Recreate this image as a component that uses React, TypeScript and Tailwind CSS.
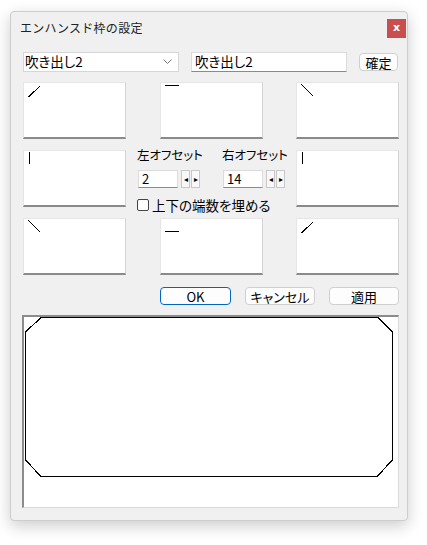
import React from "react";

type Mark = { x1: number; y1: number; x2: number; y2: number; w?: number };

const marks: (Mark | null)[] = [
  { x1: 4.5, y1: 14, x2: 16.5, y2: 2.5 },
  { x1: 4, y1: 2, x2: 18, y2: 2 },
  { x1: 4.5, y1: 1.5, x2: 16.5, y2: 13.5 },
  { x1: 5.5, y1: 1, x2: 5.5, y2: 13, w: 1.6 },
  null,
  { x1: 5.5, y1: 1, x2: 5.5, y2: 13, w: 1.6 },
  { x1: 4.5, y1: 1.5, x2: 16.5, y2: 13.5 },
  { x1: 4, y1: 12.5, x2: 18, y2: 12.5 },
  { x1: 4.5, y1: 14, x2: 16.5, y2: 2.5 },
];

function CornerBox({ m }: { m: Mark }) {
  return (
    <div className="h-[57px] w-[103px] bg-white border border-[#e6e6e6] border-r-[#d4d4d4] border-b-2 border-b-[#8a8a8a]">
      <svg width="20" height="16" className="block" shapeRendering="crispEdges">
        <line x1={m.x1} y1={m.y1} x2={m.x2} y2={m.y2} stroke="#000" strokeWidth={m.w ?? 1} />
      </svg>
    </div>
  );
}

function Spinner() {
  return (
    <div className="flex gap-[1px] h-[18px]">
      {["◂", "▸"].map((c) => (
        <div
          key={c}
          className="w-[9px] h-full border border-[#c8c8c8] bg-[#f8f8f8] flex items-center justify-center text-[8px] leading-none text-black"
        >
          {c}
        </div>
      ))}
    </div>
  );
}

function Offset({ label, value, wide }: { label: string; value: string; wide?: boolean }) {
  return (
    <div className={"flex flex-col " + (wide ? "w-[85px]" : "")}>
      <div className="text-[12.5px] leading-[14px] h-[14px] -mt-[2px] [font-feature-settings:'palt']">{label}</div>
      <div className="flex items-center gap-[3px] mt-[8px]">
        <div className="w-[40px] h-[18px] bg-white border border-[#dcdcdc] border-b-[#8a8a8a] pl-[3px] text-[13px] leading-[16px] ml-[1px]">
          {value}
        </div>
        <Spinner />
      </div>
    </div>
  );
}

function Btn({ children, focus }: { children: React.ReactNode; focus?: boolean }) {
  return (
    <div
      className={
        "h-[18px] rounded-[4px] bg-[#fdfdfd] flex items-center justify-center text-[13px] leading-none [font-feature-settings:'palt'] " +
        (focus ? "w-[71px] border-[1.5px] border-[#0067c0]" : "w-[70px] border border-[#cfcfcf]")
      }
    >
      {children}
    </div>
  );
}

export default function App() {
  return (
    <div className="w-[427px] h-[545px] bg-white pt-[11px] pl-[10px] font-['Noto_Sans_CJK_JP','Noto_Sans',sans-serif] text-black">
      <div className="w-[398px] h-[510px] bg-[#f0f0f0] border border-[#cdcdcd] rounded-[4px] shadow-[0_5px_16px_rgba(0,0,0,0.2)] pl-[12px] pr-[7px]">
        {/* title bar */}
        <div className="flex justify-between items-start h-[27px] -mr-[7px]">
          <div className="text-[12px] text-[#222] mt-[8px] -ml-[3px] leading-[16px] tracking-[0.3px]">エンハンスド枠の設定</div>
          <div className="mt-[7px] mr-[1px] w-[19px] h-[19px] bg-[#c94f4f] flex items-center justify-center text-white text-[11px] font-bold font-['DejaVu_Sans',sans-serif] leading-none pb-[2px]">
            x
          </div>
        </div>

        {/* selector row */}
        <div className="flex items-center gap-[12px] mt-[13px] h-[20px]">
          <div className="w-[156px] h-[20px] bg-white border border-[#d6d6d6] flex items-center justify-between pl-[1px] pr-[6px]">
            <span className="text-[13.5px] leading-none [font-feature-settings:'palt']">吹き出し2</span>
            <svg width="9" height="6" viewBox="0 0 9 6">
              <polyline points="0.5,0.5 4.5,4.5 8.5,0.5" fill="none" stroke="#777" strokeWidth="1" />
            </svg>
          </div>
          <div className="w-[156px] h-[20px] bg-white border border-[#dcdcdc] border-b-[#8a8a8a] flex items-center pl-[3px]">
            <span className="text-[13.5px] leading-none [font-feature-settings:'palt']">吹き出し2</span>
          </div>
          <div className="w-[39px] h-[18px] rounded-[4px] border border-[#cfcfcf] bg-[#fdfdfd] flex items-center justify-center text-[13px] leading-none">
            確定
          </div>
        </div>

        {/* 3x3 grid */}
        <div className="grid grid-cols-[103px_170px_103px] grid-rows-[57px_57px_58px] gap-y-[11px] mt-[10px] w-[376px]">
          {marks.map((m, i) =>
            m ? (
              <div key={i} className={i % 3 === 1 ? "flex justify-center" : ""}>
                <CornerBox m={m} />
              </div>
            ) : (
              <div key={i} className="pl-[11px]">
                <div className="flex">
                  <Offset label="左オフセット" value="2" wide />
                  <Offset label="右オフセット" value="14" />
                </div>
                <div className="flex items-center gap-[3px] mt-[11px]">
                  <div className="w-[12px] h-[12px] border border-[#444] rounded-[2px] bg-white" />
                  <span className="text-[13.5px] leading-[12px] [font-feature-settings:'palt']">上下の端数を埋める</span>
                </div>
              </div>
            )
          )}
        </div>

        {/* buttons */}
        <div className="flex justify-end gap-[14px] mt-[11px] mr-[1px]">
          <Btn focus>OK</Btn>
          <Btn>キャンセル</Btn>
          <Btn>適用</Btn>
        </div>

        {/* preview */}
        <div className="mt-[10px] -ml-[1px] w-[377px] h-[193px] bg-white border-t-2 border-l-2 border-t-[#8c8c8c] border-l-[#8c8c8c] border-r border-b border-r-[#dadada] border-b-[#dadada]">
          <svg width="374" height="190" className="block" shapeRendering="crispEdges">
            <polygon
              points="17,0.5 354,0.5 368.5,15 368.5,143 353,159.5 17,159.5 1.5,143 1.5,15"
              fill="none"
              stroke="#000"
              strokeWidth="1.2"
            />
          </svg>
        </div>
      </div>
    </div>
  );
}
